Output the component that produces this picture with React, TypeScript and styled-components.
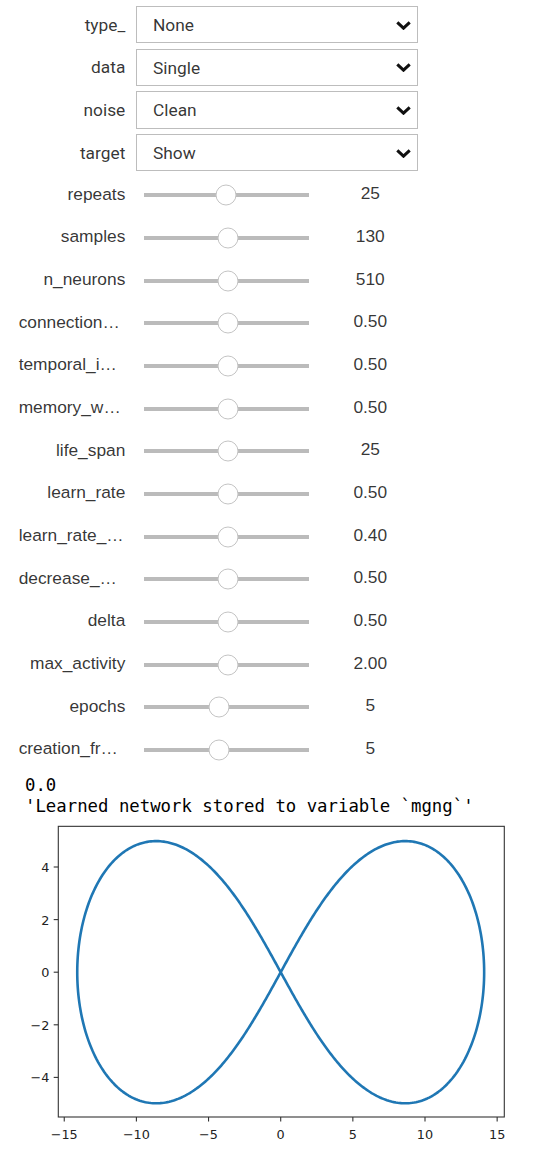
import React from "react";
import styled, { createGlobalStyle } from "styled-components";

const GlobalStyle = createGlobalStyle`
  html, body { margin: 0; padding: 0; background: #ffffff; }
  body { width: 559px; }
`;

const Page = styled.div`
  width: 559px;
  display: flex;
  flex-direction: column;
`;

const Form = styled.div`
  display: flex;
  flex-direction: column;
  gap: 5.33px;
  padding-top: 6px;
`;

const Row = styled.div`
  display: flex;
  align-items: center;
  height: 37.33px;
`;

const Label = styled.div<{ $sans?: boolean; $clipped?: boolean }>`
  width: 106.67px;
  margin-left: 18.67px;
  margin-right: 10.67px;
  margin-bottom: ${(p) => (p.$sans ? "0" : "3px")};
  text-align: ${(p) => (p.$clipped ? "left" : "right")};
  white-space: nowrap;
  font-family: ${(p) => (p.$sans ? 'Roboto, sans-serif' : '"Liberation Sans", Arial, sans-serif')};
  font-size: 17.33px;
  color: rgba(0, 0, 0, 0.8);
  line-height: 34px;
`;

const Select = styled.div`
  box-sizing: border-box;
  width: 282px;
  height: 37.33px;
  border: 1px solid #bdbdbd;
  display: flex;
  align-items: center;
  justify-content: space-between;
  padding: 1px 6px 0 16px;
  font-family: Roboto, sans-serif;
  font-size: 17.33px;
  color: rgba(0, 0, 0, 0.8);
`;

const SliderBox = styled.div`
  width: 165px;
  padding: 0 8px;
  display: flex;
  align-items: center;
  height: 37.33px;
`;

const Track = styled.div`
  position: relative;
  width: 100%;
  height: 4px;
  background: #bbbbbb;
`;

const Thumb = styled.div`
  position: absolute;
  top: 50%;
  width: 19px;
  height: 19px;
  border-radius: 50%;
  background: #ffffff;
  border: 1px solid #c4c4c4;
  transform: translate(-50%, -50%);
`;

const Readout = styled.div`
  width: 85.33px;
  margin-left: 10.67px;
  margin-bottom: 3px;
  text-align: center;
  font-family: "Liberation Sans", Arial, sans-serif;
  font-size: 17.33px;
  color: rgba(0, 0, 0, 0.8);
`;

const Output = styled.pre`
  margin: 6.33px 0 0 0;
  padding-left: 25px;
  font-family: "DejaVu Sans Mono", monospace;
  font-size: 17.33px;
  line-height: 21.33px;
  color: #000000;
`;

const Chart = styled.svg`
  display: block;
`;

const Chevron = () => (
  <svg width="15" height="9" viewBox="0 0 15 9">
    <path d="M1.3 1.3 L7.5 7.2 L13.7 1.3" fill="none" stroke="#111" strokeWidth="3" />
  </svg>
);

const dropdowns = [
  { label: "type_", value: "None" },
  { label: "data", value: "Single" },
  { label: "noise", value: "Clean" },
  { label: "target", value: "Show" },
];

const sliders = [
  { label: "repeats", value: "25", pos: 0.5, clipped: false },
  { label: "samples", value: "130", pos: 0.509, clipped: false },
  { label: "n_neurons", value: "510", pos: 0.509, clipped: false },
  { label: "connection…", value: "0.50", pos: 0.509, clipped: true },
  { label: "temporal_i…", value: "0.50", pos: 0.509, clipped: true },
  { label: "memory_w…", value: "0.50", pos: 0.509, clipped: true },
  { label: "life_span", value: "25", pos: 0.509, clipped: false },
  { label: "learn_rate", value: "0.50", pos: 0.509, clipped: false },
  { label: "learn_rate_…", value: "0.40", pos: 0.509, clipped: true },
  { label: "decrease_…", value: "0.50", pos: 0.509, clipped: true },
  { label: "delta", value: "0.50", pos: 0.509, clipped: false },
  { label: "max_activity", value: "2.00", pos: 0.509, clipped: false },
  { label: "epochs", value: "5", pos: 0.453, clipped: false },
  { label: "creation_fr…", value: "5", pos: 0.453, clipped: true },
];

const X = (x: number) => 280.7 + x * 14.43;
const Y = (y: number) => 155.2 - y * 26.3;

const curvePath = (() => {
  const a = 14.1;
  const pts: string[] = [];
  const n = 600;
  for (let i = 0; i <= n; i++) {
    const t = (i / n) * Math.PI * 2;
    const s = Math.sin(t);
    const c = Math.cos(t);
    const d = 1 + s * s;
    const x = (a * c) / d;
    const y = (a * s * c) / d;
    pts.push(`${i === 0 ? "M" : "L"}${X(x).toFixed(2)} ${Y(y).toFixed(2)}`);
  }
  return pts.join(" ");
})();

const fmt = (v: number) => (v < 0 ? `\u2212${Math.abs(v)}` : `${v}`);

const Plot = () => {
  const left = 58.3;
  const right = 504.3;
  const top = 9.33;
  const bottom = 300;
  return (
    <Chart width={559} height={336} viewBox="0 0 559 336">
      <path d={curvePath} fill="none" stroke="#1f77b4" strokeWidth={2.6} strokeLinejoin="round" />
      <rect x={left} y={top} width={right - left} height={bottom - top} fill="none" stroke="#333" strokeWidth={1.1} />
      {[-15, -10, -5, 0, 5, 10, 15].map((v) => (
        <g key={`x${v}`}>
          <line x1={X(v)} x2={X(v)} y1={bottom} y2={bottom + 4.6} stroke="#333" strokeWidth={1.1} />
          <text
            x={X(v)}
            y={321.6}
            textAnchor="middle"
            fontFamily='"DejaVu Sans", sans-serif'
            fontSize={12.8}
            fill="#222"
          >
            {fmt(v)}
          </text>
        </g>
      ))}
      {[-4, -2, 0, 2, 4].map((v) => (
        <g key={`y${v}`}>
          <line x1={left - 4.6} x2={left} y1={Y(v)} y2={Y(v)} stroke="#333" strokeWidth={1.1} />
          <text
            x={49.3}
            y={Y(v) + 5}
            textAnchor="end"
            fontFamily='"DejaVu Sans", sans-serif'
            fontSize={12.8}
            fill="#222"
          >
            {fmt(v)}
          </text>
        </g>
      ))}
    </Chart>
  );
};

export default function App() {
  return (
    <Page>
      <GlobalStyle />
      <Form>
        {dropdowns.map((d) => (
          <Row key={d.label}>
            <Label $sans>{d.label}</Label>
            <Select>
              <span>{d.value}</span>
              <Chevron />
            </Select>
          </Row>
        ))}
        {sliders.map((s) => (
          <Row key={s.label}>
            <Label $clipped={s.clipped}>{s.label}</Label>
            <SliderBox>
              <Track>
                <Thumb style={{ left: `${s.pos * 100}%` }} />
              </Track>
            </SliderBox>
            <Readout>{s.value}</Readout>
          </Row>
        ))}
      </Form>
      <Output>
        {"0.0\n'Learned network stored to variable `mgng`'"}
      </Output>
      <Plot />
    </Page>
  );
}
